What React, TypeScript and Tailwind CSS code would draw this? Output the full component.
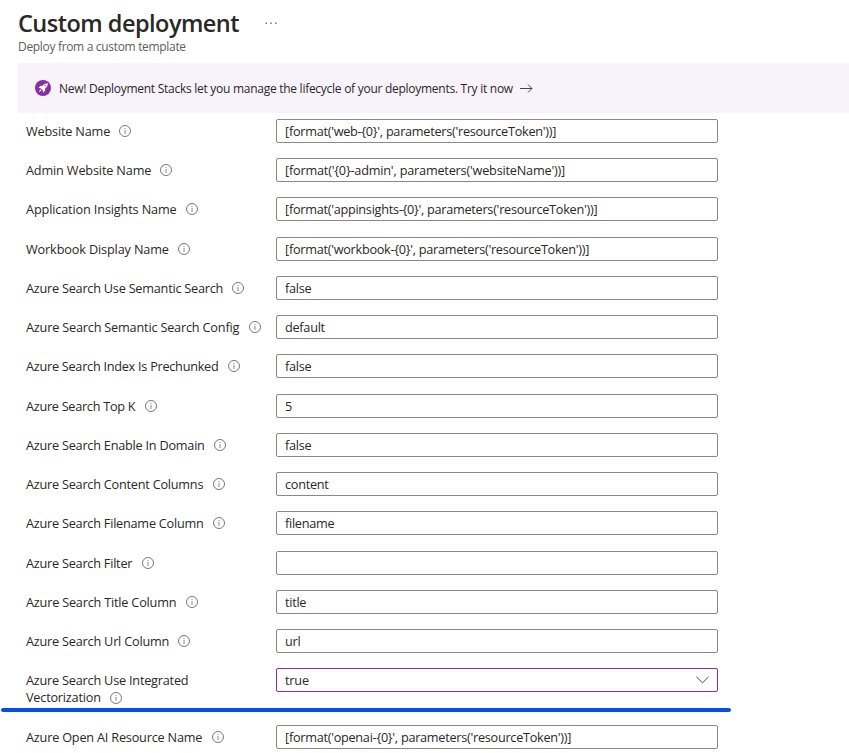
import React from 'react';

type Field = { label: string; width: string; value: string; tracking?: string; valueTracking?: string };

const fields: Field[] = [
  { label: 'Website Name', width: 'w-[84px]', tracking: 'tracking-[-0.18px]', value: "[format('web-{0}', parameters('resourceToken'))]" },
  { label: 'Admin Website Name', width: 'w-[125px]', tracking: 'tracking-[-0.16px]', value: "[format('{0}-admin', parameters('websiteName'))]", valueTracking: 'tracking-[-0.2px]' },
  { label: 'Application Insights Name', width: 'w-[151px]', tracking: 'tracking-[-0.14px]', value: "[format('appinsights-{0}', parameters('resourceToken'))]" },
  { label: 'Workbook Display Name', width: 'w-[143px]', tracking: 'tracking-[-0.14px]', value: "[format('workbook-{0}', parameters('resourceToken'))]" },
  { label: 'Azure Search Use Semantic Search', width: 'w-[197px]', value: 'false' },
  { label: 'Azure Search Semantic Search Config', width: 'w-[214px]', tracking: 'tracking-[-0.19px]', value: 'default' },
  { label: 'Azure Search Index Is Prechunked', width: 'w-[193px]', tracking: 'tracking-[-0.26px]', value: 'false' },
  { label: 'Azure Search Top K', width: 'w-[110px]', tracking: 'tracking-[-0.28px]', value: '5' },
  { label: 'Azure Search Enable In Domain', width: 'w-[179px]', value: 'false' },
  { label: 'Azure Search Content Columns', width: 'w-[178px]', value: 'content' },
  { label: 'Azure Search Filename Column', width: 'w-[178px]', value: 'filename' },
  { label: 'Azure Search Filter', width: 'w-[107px]', value: '' },
  { label: 'Azure Search Title Column', width: 'w-[151px]', tracking: 'tracking-[-0.2px]', value: 'title' },
  { label: 'Azure Search Url Column', width: 'w-[143px]', tracking: 'tracking-[-0.21px]', value: 'url' },
];

function InfoIcon() {
  return (
    <svg className="mt-[6px] ml-[9px] size-3 shrink-0" viewBox="0 0 12 12" fill="none">
      <circle cx="6" cy="6" r="5.5" stroke="#6b6967" strokeWidth="0.9" />
      <path d="M6 5v4" stroke="#8a8886" />
      <path d="M6 3v1.1" stroke="#8a8886" />
    </svg>
  );
}

function TextBox({ value, tracking = 'tracking-[-0.27px]' }: { value: string; tracking?: string }) {
  return (
    <div className="h-6 w-[442px] rounded-[2px] border border-[#8a8886] px-2 leading-[22px] whitespace-pre">
      <span className={tracking}>{value}</span>
    </div>
  );
}

function Row({ label, width, value, tracking = 'tracking-[-0.23px]', valueTracking }: Field) {
  return (
    <div className="flex h-[39.25px] items-start">
      <div className="flex w-[250px] shrink-0">
        <span className={`${width} ${tracking} shrink-0 leading-6 whitespace-nowrap`}>{label}</span>
        <InfoIcon />
      </div>
      <TextBox value={value} tracking={valueTracking} />
    </div>
  );
}

export default function App() {
  return (
    <div className="relative h-[753px] w-[849px] overflow-hidden bg-white font-['Open_Sans',sans-serif] text-[12.7px] text-[#292827]">
      <header className="h-[63px] pt-[7px] pl-[18px]">
        <div className="flex h-8 items-start">
          <h1 className="w-[221px] text-[23.5px] leading-8 font-semibold tracking-[-0.52px] whitespace-nowrap">Custom deployment</h1>
          <svg className="mt-[15px] ml-[26px] h-[3px] w-3" viewBox="0 0 12 3" fill="#605e5c">
            <rect x="0.5" y="0.5" width="1.4" height="1.4" />
            <rect x="5.3" y="0.5" width="1.4" height="1.4" />
            <rect x="10.1" y="0.5" width="1.4" height="1.4" />
          </svg>
        </div>
        <p className="text-[12px] leading-4 tracking-[-0.32px] text-[#605e5c]">Deploy from a custom template</p>
      </header>

      <div className="ml-[18px] flex h-[50px] items-center rounded-l-[2px] bg-[#f8f3fb] pl-[17px]">
        <svg className="size-4" viewBox="0 0 16 16">
          <circle cx="8" cy="8" r="8" fill="#8a2da5" />
          <path d="M12.8 3.2c-2.3 0-4.1.9-5.3 2.6L5.2 6 3.4 8l2.3.2 2.1 2.1.2 2.4 2-1.9.2-2.3c1.8-1.2 2.6-3 2.6-5.3z" fill="#fff" />
          <path d="M5.4 9.3 3.7 12.3 6.7 10.6z" fill="#fff" />
          <circle cx="10.2" cy="5.8" r="0.7" fill="#8a2da5" />
        </svg>
        <span className="ml-2 w-[454px] pt-[2px] text-[12px] tracking-[-0.27px] whitespace-nowrap">
          New! Deployment Stacks let you manage the lifecycle of your deployments. Try it now
        </span>
        <svg className="ml-[7px] h-[10px] w-[13px]" viewBox="0 0 13 10" fill="none" stroke="#484644">
          <path d="M0 5.5h12M8 1.5l4 4-4 4" />
        </svg>
      </div>

      <main className="pt-[5.9px] pl-[26px]">
        {fields.map((field) => (
          <Row key={field.label} {...field} />
        ))}
        <div className="flex h-[56.75px] items-start">
          <div className="w-[250px] shrink-0 pt-[4px] leading-[17px] tracking-[-0.21px]">
            <div>Azure Search Use Integrated</div>
            <div className="flex">
              <span className="w-[75px]">Vectorization</span>
              <span className="-mt-[3px] flex"><InfoIcon /></span>
            </div>
          </div>
          <div className="flex h-6 w-[442px] items-center justify-between rounded-[2px] border border-[#8a2da5] pr-2 pl-2">
            <span className="tracking-[-0.2px]">true</span>
            <svg className="h-[8px] w-[13px]" viewBox="0 0 13 8" fill="none" stroke="#484644">
              <path d="M.4.8l6.1 6 6.1-6" />
            </svg>
          </div>
        </div>
        <Row label="Azure Open AI Resource Name" width="w-[177px]" tracking="tracking-[-0.2px]" value="[format('openai-{0}', parameters('resourceToken'))]" />
      </main>

      <div className="absolute top-[708px] left-px h-1 w-[730px] rounded-full bg-[#0550e4]" />
    </div>
  );
}
